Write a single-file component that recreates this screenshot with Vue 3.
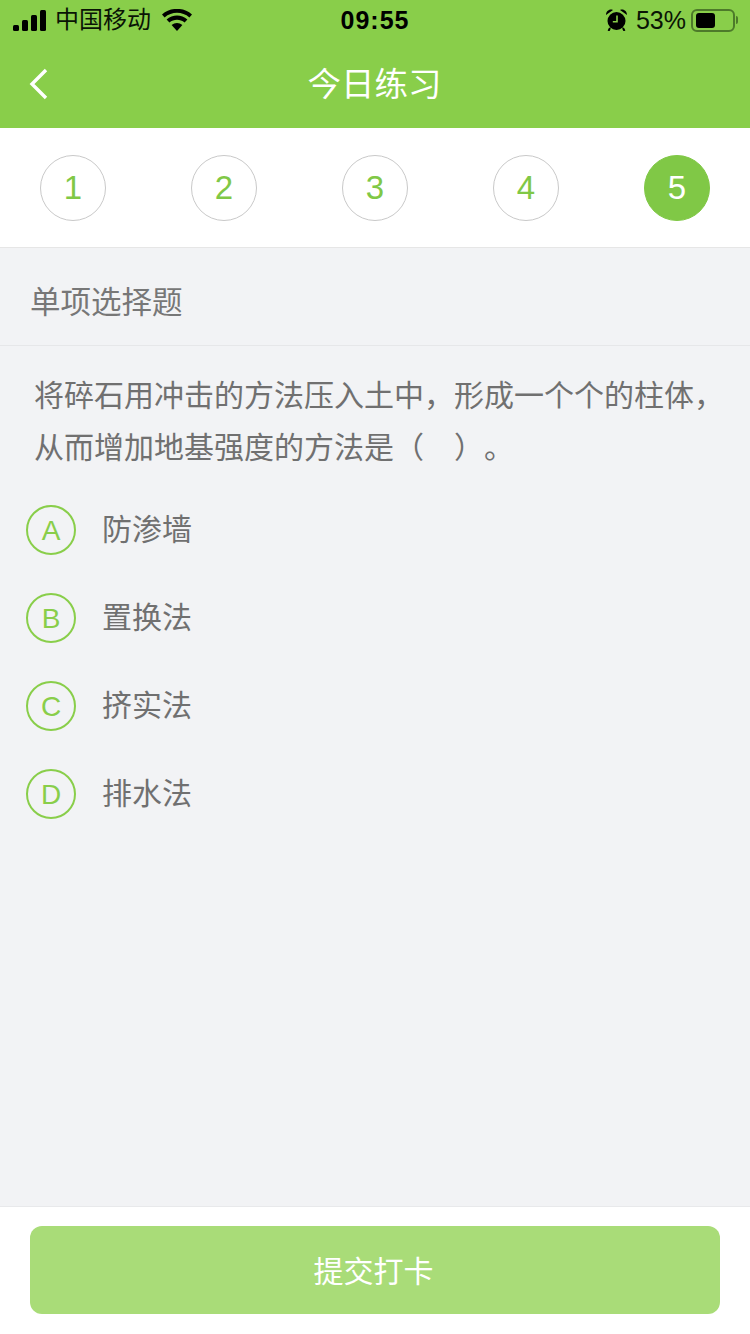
<script setup>
const steps = [1, 2, 3, 4, 5]
const options = [
  { key: 'A', text: '防渗墙' },
  { key: 'B', text: '置换法' },
  { key: 'C', text: '挤实法' },
  { key: 'D', text: '排水法' }
]
</script>

<template>
  <div class="page">
    <header class="head">
      <div class="status">
        <div class="status-left">
          <svg class="signal" width="34" height="21" viewBox="0 0 34 21">
            <rect x="0" y="15" width="6" height="6" rx="1.5" />
            <rect x="9" y="10" width="6" height="11" rx="1.5" />
            <rect x="18" y="5" width="6" height="16" rx="1.5" />
            <rect x="27" y="0" width="6" height="21" rx="1.5" />
          </svg>
          <span class="carrier">中国移动</span>
          <svg class="wifi" width="30" height="22" viewBox="0 0 30 22">
            <path d="M15 22 L9.6 16 C12.8 13.2 17.2 13.2 20.4 16 Z" />
            <path d="M7.4 13.6 L4.6 10.6 C10.6 5.2 19.4 5.2 25.4 10.6 L22.6 13.6 C18.2 9.8 11.8 9.8 7.4 13.6 Z" />
            <path d="M2.6 8.4 L0 5.4 C8.4 -2 21.6 -2 30 5.4 L27.4 8.4 C20.2 2.2 9.8 2.2 2.6 8.4 Z" />
          </svg>
        </div>
        <span class="time">09:55</span>
        <div class="status-right">
          <svg class="alarm" width="21" height="22" viewBox="0 0 21 22">
            <path d="M0 6 C0 2 3.5 -0.5 7 1 Z M21 6 C21 2 17.5 -0.5 14 1 Z" />
            <circle cx="10.5" cy="12" r="9" />
            <path d="M4 19 L2.5 22 M17 19 L18.5 22" stroke="#000" stroke-width="2" />
            <path d="M11 6.5 V12.8 H6.8" fill="none" stroke="#89ce4a" stroke-width="1.6" />
          </svg>
          <span class="percent">53%</span>
          <div class="battery"><div class="battery-fill"></div></div>
          <div class="battery-cap"></div>
        </div>
      </div>
      <div class="nav">
        <svg class="back" width="20" height="32" viewBox="0 0 20 32">
          <path d="M17 2 L3 16 L17 30" fill="none" stroke="#fff" stroke-width="3.4" />
        </svg>
        <h1 class="title">今日练习</h1>
      </div>
    </header>

    <div class="steps">
      <div v-for="n in steps" :key="n" class="step" :class="{ current: n === 5 }">{{ n }}</div>
    </div>

    <main class="body">
      <div class="kind">单项选择题</div>
      <div class="question">
        <div>将碎石用冲击的方法压入土中，形成一个个的柱体，</div>
        <div>从而增加地基强度的方法是（<span class="blank"></span>）<span class="stop">。</span></div>
      </div>
      <div class="options">
        <div v-for="o in options" :key="o.key" class="option">
          <span class="letter">{{ o.key }}</span>
          <span class="option-text">{{ o.text }}</span>
        </div>
      </div>
    </main>

    <footer class="foot">
      <button class="submit">提交打卡</button>
    </footer>
  </div>
</template>

<style scoped>
.page {
  width: 750px;
  height: 1334px;
  display: flex;
  flex-direction: column;
  background: #f2f3f5;
  font-family: "Liberation Sans", "Noto Sans CJK SC", sans-serif;
  overflow: hidden;
}

.head {
  height: 128px;
  background: #89ce4a;
  flex: none;
}

.status {
  height: 40px;
  display: flex;
  align-items: center;
  justify-content: space-between;
  padding: 0 12px 0 13px;
  position: relative;
  color: #0a1405;
}

.status-left,
.status-right {
  display: flex;
  align-items: center;
}

.signal {
  fill: #000;
}

.carrier {
  font-size: 24px;
  margin-left: 8px;
  line-height: 36px;
}

.wifi {
  fill: #000;
  margin-left: 11px;
}

.time {
  position: absolute;
  left: 0;
  right: 0;
  text-align: center;
  font-size: 25px;
  font-weight: 700;
  letter-spacing: 1px;
  color: #000;
}

.alarm {
  fill: #000;
  margin-right: 9px;
}

.percent {
  font-size: 25px;
  margin-right: 5px;
}

.battery {
  width: 44px;
  height: 23px;
  box-sizing: border-box;
  border: 2px solid #4d7a2a;
  border-radius: 6px;
  padding: 2px 3px;
}

.battery-fill {
  width: 19px;
  height: 100%;
  background: #000;
  border-radius: 3px;
}

.battery-cap {
  width: 2px;
  height: 8px;
  margin-left: 1px;
  background: #4d7a2a;
  border-radius: 0 2px 2px 0;
}

.nav {
  height: 88px;
  display: flex;
  align-items: center;
  justify-content: center;
  position: relative;
}

.back {
  position: absolute;
  left: 29px;
  top: 28px;
}

.title {
  margin: 0 0 6px -1px;
  font-size: 33.5px;
  font-weight: 400;
  color: #fff;
}

.steps {
  height: 120px;
  flex: none;
  box-sizing: border-box;
  background: #fff;
  border-bottom: 1px solid #e6e6e6;
  display: flex;
  align-items: center;
  justify-content: space-between;
  padding: 1px 40px 0;
}

.step {
  width: 66px;
  height: 66px;
  box-sizing: border-box;
  border: 1px solid #c9c9c9;
  border-radius: 50%;
  display: flex;
  align-items: center;
  justify-content: center;
  font-size: 33px;
  color: #80c846;
}

.step.current {
  background: #80c846;
  border-color: #80c846;
  color: #fff;
}

.body {
  flex: 1;
}

.kind {
  height: 98px;
  box-sizing: border-box;
  border-bottom: 1px solid #e6e7e9;
  padding-left: 30px;
  line-height: 108px;
  font-size: 30.5px;
  color: #777;
}

.question {
  padding: 24px 10px 0 34px;
  font-size: 30px;
  line-height: 52px;
  color: #707070;
}

.blank {
  display: inline-block;
  width: 30px;
}

.stop {
  display: inline-block;
}

.options {
  margin-top: 31px;
  padding-left: 26px;
}

.option {
  height: 88px;
  display: flex;
  align-items: flex-start;
}

.letter {
  width: 50px;
  height: 50px;
  box-sizing: border-box;
  border: 2px solid #89ce4a;
  border-radius: 50%;
  display: flex;
  align-items: center;
  justify-content: center;
  padding-top: 1px;
  font-size: 28px;
  color: #89ce4a;
}

.option-text {
  margin-left: 26px;
  font-size: 30px;
  line-height: 50px;
  color: #707070;
}

.foot {
  height: 128px;
  flex: none;
  box-sizing: border-box;
  background: #fff;
  border-top: 1px solid #e8e9eb;
  padding: 19px 30px 0;
}

.submit {
  display: block;
  width: 690px;
  height: 88px;
  border: none;
  border-radius: 12px;
  background: #a9dc78;
  color: #fff;
  font-family: inherit;
  font-size: 30px;
  padding: 0 3px 3px 0;
}
</style>
